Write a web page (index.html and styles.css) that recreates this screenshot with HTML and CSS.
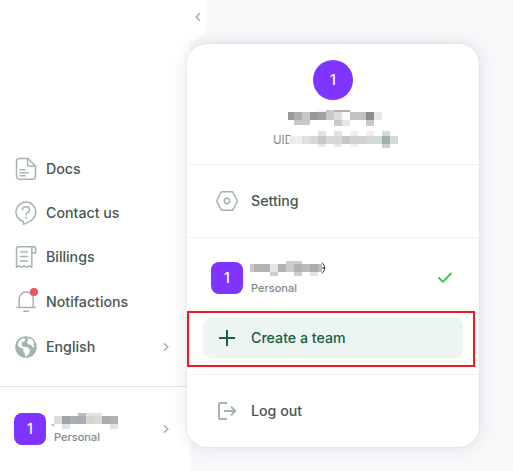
FILE: index.html
```html
<!DOCTYPE html>
<html lang="en">
<head>
<meta charset="utf-8">
<title>Account menu</title>
<link rel="stylesheet" href="styles.css">
</head>
<body>
<div class="app">
  <aside class="sidebar">
    <nav class="nav">
      <a class="nav-item"><svg class="icon" viewBox="0 0 24 24"><path d="M14 1.500H5.200A2.700 2.700 0 0 0 2.500 4.200v15.300a2.700 2.700 0 0 0 2.700 2.700h13.600a2.700 2.700 0 0 0 2.700-2.700V9.200z"/><path d="M13.600 2v5.200a2 2 0 0 0 2 2h5.600M6 12.800h5M6 15.800h8M6 18.800h5"/></svg><span>Docs</span></a>
      <a class="nav-item"><svg class="icon" viewBox="0 0 24 24"><path d="M9.300 20.500v2.700c4.300-.8 12.500-5 12.500-12.200A9.900 9.900 0 1 0 9.300 20.500z"/><path d="M8.500 8.800c0-4.200 7-4.200 7 0 0 2.700-3.500 2.500-3.500 5.200M12 16.300v1"/></svg><span>Contact us</span></a>
      <a class="nav-item"><svg class="icon" viewBox="0 0 24 24"><path d="M17.800 8V3.500c0-1.200.8-1.700 1.900-1.700s1.900.7 1.900 1.700V8zM19.500 1.800H4.200c-1 0-1.700.7-1.700 1.700v18.800l2.500-1.500 2.600 1.500 2.600-1.500 2.600 1.500 2.600-1.500 2.400 1.500V8"/><path d="M6.500 7h7M6.500 11.500h7M6.500 16h7"/></svg><span>Billings</span></a>
      <a class="nav-item notices"><span class="bell"><svg class="icon" viewBox="0 0 24 24"><path d="M5.200 17.500V9a7 7 0 0 1 14 0v8.500M2.800 17.500h18.700M9.800 21.300h4.600"/></svg><i class="dot"></i></span><span>Notifactions</span></a>
      <a class="nav-item language"><svg class="icon" viewBox="0 0 24 24"><circle class="fill" cx="12" cy="12" r="10.800"/><path class="land" d="M4.200 7.600C5.500 5.300 7.300 3.800 9.500 3.200l1.800.8-.8 2.500-2.600 1-.4 2.600 2 1.900 4 .2 2.600 2.800-.8 3.200-2.500 2.700-1.600 1.200-.2-3.300-1.600-2.600-.2-2.600-3-.8-2.500-2.600z"/><path class="land" d="M13.200 3c3 .1 5.800 1.900 7.100 4.600l-.8 1.600 1 3-2.400-.4-1.200-2-2.700-.5-1.400-2.600 1.600-1.600z"/></svg><span>English</span><svg class="chevron" viewBox="0 0 8 10"><path d="m2 1.200 3.800 3.800L2 8.800"/></svg></a>
    </nav>
    <div class="account">
      <div class="avatar">1</div>
      <div class="account-text">
        <svg class="mask mask-side" viewBox="0 0 68 17"><path fill="#cbb5fa" d="M0 12h4v4z"/><path fill="#dcdcdc" d="M4 4h8v8H4z"/><path fill="#9fa5a7" d="M12 4h8v8h-8z"/><path fill="#abafb3" d="M20 4h8v8h-8z"/><path fill="#a7abb4" d="M28 4h8v8h-8z"/><path fill="#d7d5cf" d="M36 4h8v8h-8z"/><path fill="#dbdbdb" d="M44 4h8v8h-8z"/><path fill="#abaea8" d="M52 4h8v8h-8z"/><path fill="#b6b1ae" d="M60 4h8v8h-8z"/><path fill="#b9bdc5" d="M28 1h8v3h-8z"/><path fill="#dde0e6" d="M36 1h8v3h-8z"/><path fill="#e5e4e1" d="M44 1h8v3h-8z"/><path fill="#e1e1e1" d="M12 12h8v5h-8zM60 12h8v5h-8z"/></svg>
        <span class="plan">Personal</span>
      </div>
      <svg class="chevron" viewBox="0 0 8 10"><path d="m2 1.200 3.800 3.800L2 8.800"/></svg>
    </div>
  </aside>
  <div class="collapse"><svg class="chevron" viewBox="0 0 8 10"><path d="M6 1.200 2.200 5 6 8.800"/></svg></div>
  <section class="menu">
    <header class="profile">
      <div class="avatar round">1</div>
      <svg class="mask mask-name" viewBox="0 0 94 17"><path fill="#9b9b9b" d="M0 3h6v8H0z"/><path fill="#adadad" d="M6 3h8v8H6z"/><path fill="#c8c8c8" d="M14 3h8v8h-8zM38 3h8v8h-8zM38 1h8v2h-8zM6 11h16v5H6zM46 11h8v6h-8zM78 11h8v6h-8z"/><path fill="#999" d="M22 3h8v8h-8z"/><path fill="#a2a2a2" d="M30 3h8v8h-8z"/><path fill="#ddd" d="M46 3h8v8h-8z"/><path fill="#fafafa" d="M54 3h8v8h-8z"/><path fill="#c2c2c2" d="M62 3h16v8H62z"/><path fill="#8c8c8c" d="M78 3h8v8h-8z"/><path fill="#e6e6e6" d="M86 3h8v8h-8zM54 11h8v6h-8z"/><path fill="#b0b0b0" d="M46 1h16v2H46z"/><path fill="#f3f3f3" d="M30 1h8v2h-8z"/></svg>
      <div class="uid"><span>UID</span><svg class="mask mask-uid" viewBox="0 0 109 17"><path fill="#e9ebea" d="M0 5h5v8H0zM29 13h8v3h-8zM45 13h8v3h-8z"/><path fill="#eef0f0" d="M5 5h8v8H5zM61 0h8v5h-8zM77 0h8v5h-8zM61 13h8v3h-8z"/><path fill="#e0e2e1" d="M13 5h8v8h-8zM29 0h8v5h-8zM45 0h8v5h-8z"/><path fill="#d7d9d8" d="M21 5h8v8h-8zM37 5h8v8h-8zM45 5h8v8h-8zM77 5h8v8h-8z"/><path fill="#c5c8c7" d="M29 5h8v8h-8zM53 5h8v8h-8z"/><path fill="#ced2d0" d="M61 5h8v8h-8zM69 5h8v8h-8z"/><path fill="#d1dcd9" d="M85 5h8v8h-8zM101 5h8v8h-8zM93 0h8v5h-8z"/><path fill="#9fb3ae" d="M93 5h8v8h-8z"/><path fill="#c8d3d0" d="M93 13h8v4h-8z"/></svg></div>
    </header>
    <div class="menu-row"><svg class="icon" viewBox="0 0 24 24"><path d="M6.500 2.700h11l5 9.300-5 9.300h-11L1.500 12z"/><circle cx="12" cy="12" r="2.700"/></svg><span>Setting</span></div>
    <div class="teams">
      <div class="team">
        <div class="avatar">1</div>
        <div class="team-text">
          <svg class="mask mask-team" viewBox="0 0 77 17"><path class="edge" d="M72 3c3.500 2 3.500 8 0 10M72 8h3"/><path fill="#c9c9c9" d="M0 4h4v8H0z"/><path fill="#b3b3b3" d="M4 4h8v8H4zM12 4h8v8h-8zM28 4h8v8h-8zM44 4h8v8h-8z"/><path fill="#e5e5e5" d="M20 4h8v8h-8zM60 12h8v4h-8z"/><path fill="#ccc" d="M36 1h16v3H36zM36 4h8v8h-8zM20 12h8v4h-8zM44 12h8v4h-8z"/><path fill="#bbb" d="M52 4h8v8h-8zM68 4h4v8h-4z"/><path fill="#aaa" d="M60 4h8v8h-8z"/></svg>
          <span class="plan">Personal</span>
        </div>
        <svg class="check" viewBox="0 0 16 12"><path d="m2 5.800 3.800 4L14 1.500"/></svg>
      </div>
      <div class="highlight">
        <div class="create"><svg class="icon plus" viewBox="0 0 24 24"><path d="M12 4v16M4 12h16"/></svg><span>Create a team</span></div>
      </div>
    </div>
    <div class="menu-row logout"><svg class="icon" viewBox="0 0 24 24"><path d="M12 4H5.200c-.7 0-1.200.5-1.200 1.200v13.600c0 .7.500 1.200 1.200 1.200H12M9 12h11M16 7.600l4.300 4.400-4.300 4.400"/></svg><span>Log out</span></div>
  </section>
</div>
</body>
</html>
```
FILE: styles.css
```css
* { box-sizing: border-box; }
body {
  margin: 0;
  overflow: hidden;
  background: #f7f8fa;
  color: #485752;
  font: 450 14.2px/20px Inter, "Liberation Sans", sans-serif;
}
svg { display: block; flex: none; fill: none; stroke-linecap: round; stroke-linejoin: round; }
.app { position: relative; display: flex; align-items: flex-start; width: 513px; height: 471px; }
.sidebar { display: flex; flex-direction: column; width: 190px; height: 471px; background: #fff; }
.nav { display: flex; flex-direction: column; height: 388px; padding-top: 147px; border-bottom: 1px solid #dce6e4; }
.nav-item { display: flex; flex: none; align-items: center; gap: 8px; height: 44px; padding: 0 20px 0 14px; }
.nav-item.notices { height: 46px; }
.nav-item.language { height: 44px; }
.icon { width: 24px; height: 24px; stroke: #a3b5af; stroke-width: 1.5; }
.bell { position: relative; }
.dot { position: absolute; top: -2px; right: 0; width: 8px; height: 8px; border-radius: 50%; background: #eb5757; }
.icon .fill { fill: #a3b5af; stroke: none; }
.icon .land { fill: #fff; stroke: none; }
.chevron { width: 8px; height: 10px; stroke: #a3b5af; stroke-width: 1.6; stroke-linecap: butt; stroke-linejoin: miter; }
.nav-item .chevron, .account .chevron { margin-left: auto; }
.account { display: flex; flex: none; align-items: center; height: 84px; padding: 0 20px 0 14px; }
.avatar { display: flex; flex: none; align-items: center; justify-content: center; width: 32px; height: 32px; border-radius: 8px; background: #7f35ff; color: #fff; font-size: 14px; font-weight: 500; }
.account-text { margin: -2px 0 0 4px; }
.plan { display: block; color: #7c8985; font-size: 11px; line-height: 16px; }
.account .plan { padding-left: 4px; }
.mask { shape-rendering: crispEdges; }
.edge { stroke: #333; shape-rendering: geometricPrecision; }
.mask-side { width: 68px; height: 17px; }
.collapse { display: flex; width: 16px; height: 41px; padding: 12px 0 0 4px; border-radius: 0 0 16px 0; background: #fff; }
.menu { position: absolute; top: 44px; left: 187px; width: 292px; height: 403px; border-radius: 20px; background: #fff; box-shadow: 0 0 2px rgba(45, 45, 80, .1), 0 0 16px rgba(45, 50, 70, .13); }
.profile { display: flex; flex-direction: column; align-items: center; height: 121px; padding-top: 16px; border-bottom: 1px solid #ecf3f2; }
.avatar.round { width: 40px; height: 40px; border-radius: 50%; }
.mask-name { width: 94px; height: 17px; margin: 9px 0 0 4px; }
.uid { display: flex; height: 17px; margin: 5px 0 0 5px; color: #7c8985; font-size: 11.5px; font-weight: 400; line-height: 18px; }
.uid span { width: 16px; white-space: nowrap; }
.mask-uid { position: relative; width: 109px; height: 17px; }
.menu-row { display: flex; align-items: center; gap: 12px; height: 73px; padding-left: 28px; border-bottom: 1px solid #ecf3f2; }
.teams { height: 137px; border-bottom: 1px solid #ecf3f2; }
.team { display: flex; align-items: center; height: 73px; padding: 7px 26px 0 24px; }
.team-text { margin: 0 0 0 7px; }
.team-text .plan { margin-top: 3px; padding-left: 1px; }
.mask-team { width: 77px; height: 17px; }
.check { width: 16px; height: 12px; margin-left: auto; stroke: #28cd41; stroke-width: 1.8; }
.highlight { width: 288px; height: 56px; padding: 5px 10px 5px 14px; border: 2px solid #ed1c24; }
.create { display: flex; align-items: center; gap: 12px; width: 260px; height: 40px; padding-left: 12px; border-radius: 8px; background: #ecf5f2; color: #1b5e46; }
.icon.plus { stroke: #1b5e46; stroke-width: 2; stroke-linecap: butt; }
.logout { height: 72px; border: 0; }
.logout .icon { stroke-width: 2; stroke-linecap: butt; }
```
